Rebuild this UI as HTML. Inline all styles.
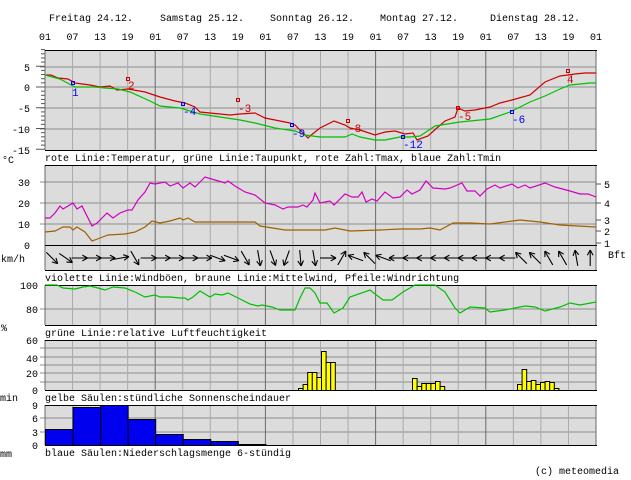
<!DOCTYPE html>
<html><head><meta charset="utf-8"><style>
html,body{margin:0;padding:0;background:#fff;width:631px;height:480px;overflow:hidden}
svg{display:block}
text{font-family:"Liberation Mono",monospace;font-size:10px;fill:#000}
</style></head><body>
<svg id="s" width="631" height="480" xmlns="http://www.w3.org/2000/svg">
<g id="bg"></g>
<text x="49" y="21">Freitag 24.12.</text>
<text x="160" y="21">Samstag 25.12.</text>
<text x="270" y="21">Sonntag 26.12.</text>
<text x="380" y="21">Montag 27.12.</text>
<text x="490" y="21">Dienstag 28.12.</text>
<g id="hrs" text-anchor="middle"></g>
<g text-anchor="end">
<text x="30" y="71">5</text><text x="30" y="91">0</text><text x="30" y="112">-5</text><text x="30" y="133">-10</text><text x="30" y="154">-15</text>
<text x="30" y="186">30</text><text x="30" y="207">20</text><text x="30" y="228">10</text><text x="30" y="249">0</text>
<text x="38" y="289">100</text><text x="38" y="313">80</text>
<text x="38" y="344">60</text><text x="38" y="362">40</text><text x="38" y="377">20</text><text x="38" y="394">0</text>
<text x="38" y="409">9</text><text x="38" y="422">6</text><text x="38" y="436">3</text><text x="38" y="449">0</text>
</g>
<text x="604" y="188">5</text><text x="604" y="207">4</text><text x="604" y="224">3</text><text x="604" y="235">2</text><text x="604" y="247">1</text>
<text x="608" y="258">Bft</text>
<text x="2" y="163">°C</text>
<text x="1" y="262">km/h</text>
<text x="1" y="331">%</text>
<text x="0" y="401">min</text>
<text x="0" y="457">mm</text>
<text x="45" y="161">rote Linie:Temperatur, grüne Linie:Taupunkt, rote Zahl:Tmax, blaue Zahl:Tmin</text>
<text x="45" y="281">violette Linie:Windböen, braune Linie:Mittelwind, Pfeile:Windrichtung</text>
<text x="45" y="336">grüne Linie:relative Luftfeuchtigkeit</text>
<text x="45" y="401">gelbe Säulen:stündliche Sonnenscheindauer</text>
<text x="45" y="456">blaue Säulen:Niederschlagsmenge 6-stündig</text>
<text x="535" y="474">(c) meteomedia</text>
<g id="fg"></g>
<g>
<text x="72" y="96" style="fill:#00f;font-size:11px">1</text>
<text x="128" y="89" style="fill:#c00;font-size:11px">2</text>
<text x="183" y="115" style="fill:#00f;font-size:11px">-4</text>
<text x="238" y="112" style="fill:#c00;font-size:11px">-3</text>
<text x="292" y="137" style="fill:#00f;font-size:11px">-9</text>
<text x="348" y="132" style="fill:#c00;font-size:11px">-8</text>
<text x="403" y="148" style="fill:#00f;font-size:11px">-12</text>
<text x="458" y="120" style="fill:#c00;font-size:11px">-5</text>
<text x="512" y="123" style="fill:#00f;font-size:11px">-6</text>
<text x="567" y="83" style="fill:#c00;font-size:11px">4</text>
</g>
</svg>
<script>
var NS="http://www.w3.org/2000/svg";
function el(p,t,a){var e=document.createElementNS(NS,t);for(var k in a)e.setAttribute(k,a[k]);document.getElementById(p).appendChild(e);return e;}
var panels=[[50,150],[165,270],[285,325],[340,390],[405,445]];
var hg=[[67,87,108,129],[182,203,224],[309],[348,357,365,373,382],[418,432]];
panels.forEach(function(p,i){
 el('bg','rect',{x:45,y:p[0],width:551,height:p[1]-p[0],fill:'#dcdcdc'});
 hg[i].forEach(function(y){el('bg','line',{x1:40,x2:596,y1:y,y2:y,stroke:'#8c8c8c'});});
 for(var j=0;j<=20;j++){var x=45+j*27.55;var d=j%4==0;
  el('bg','line',{x1:x,x2:x,y1:p[0],y2:p[1],stroke:d?'#6a6a6a':'#aaaaaa','stroke-width':1});}
 el('bg','line',{x1:45,x2:597,y1:p[0]+.5,y2:p[0]+.5,stroke:'#000'});
 el('bg','line',{x1:45,x2:597,y1:p[1]+.5,y2:p[1]+.5,stroke:'#000'});
});
el('bg','line',{x1:45,x2:597,y1:245.5,y2:245.5,stroke:'#000'});
for(var d=-15;d<=9;d++){var y=87-d*4.15;el('bg','line',{x1:d%5==0?36:41,x2:45,y1:y,y2:y,stroke:'#555'});}
[184,203,220,231,243].forEach(function(y){el('bg','line',{x1:596,x2:601,y1:y,y2:y,stroke:'#555'});});
var hl=['01','07','13','19'];
for(var j=0;j<=20;j++){var t=el('hrs','text',{x:45+j*27.55,y:40});t.textContent=hl[j%4];}
function pl(pts,c){el('fg','polyline',{points:pts,fill:'none',stroke:c,'stroke-width':1.2});}
pl("45,75 51,75 58,78 68,79 75,83 90,85 100,87 110,86 117,90 128,89 145,92 160,97 175,101 185,103 195,107 200,112 230,115 240,114 255,113 265,118 275,120 290,123 295,125 300,130 308,138 310,136 320,128 334,121 345,125 350,128 360,130 375,135 385,132 395,131 405,134 413,133 417,140 428,136 438,127 445,121 455,117 458,108 465,111 475,110 490,107 500,103 512,100 530,95 545,82 560,76 575,74 585,73 596,73","#d00000");
pl("45,75 60,79 75,87 95,87 105,88 118,89 130,92 150,101 160,106 180,108 200,114 220,117 240,120 255,123 275,128 295,131 305,135 320,137 335,137 345,137 352,134 360,137 375,140 385,140 400,137 410,137 420,136 435,126 460,122 490,119 510,112 530,102 545,96 560,89 570,85 590,83 596,83","#00c000");
pl("45,218 50,218 55,213 60,206 63,209 68,206 73,203 77,209 82,206 92,226 97,223 103,217 107,213 113,218 120,213 128,210 132,210 138,200 145,192 150,183 155,184 165,182 170,186 178,183 183,188 190,183 195,187 205,177 215,180 222,182 225,183 228,181 235,186 245,192 255,195 265,203 275,205 283,209 288,207 298,207 303,205 307,207 313,200 315,193 320,203 330,201 334,205 345,194 352,197 358,197 362,192 366,202 372,199 377,201 385,192 393,198 400,197 407,190 412,194 420,190 426,181 433,188 445,189 450,188 462,183 467,191 475,191 480,196 487,189 495,185 500,188 512,184 518,188 525,185 530,188 545,183 555,187 570,191 580,194 588,194 596,197","#d000c0");
pl("45,232 55,231 63,227 70,227 73,230 77,227 85,232 92,241 100,238 108,235 125,234 135,232 145,227 152,221 160,223 170,221 180,218 183,220 188,218 195,222 255,222 260,226 285,230 325,230 335,228 350,231 380,230 400,229 420,229 430,228 440,230 453,223 470,223 490,224 520,220 540,222 560,225 596,227","#a06000");
pl("45,285 57,285 63,288 75,289 83,287 90,286 98,288 105,290 113,287 125,288 135,292 145,297 155,295 160,297 170,297 180,298 185,298 188,300 193,297 200,291 210,297 215,294 222,295 228,293 236,297 250,304 258,306 262,305 272,307 280,310 295,310 300,298 305,288 310,288 315,293 320,303 327,303 334,313 343,308 350,297 370,290 383,300 392,300 403,292 415,285 435,285 445,292 455,308 460,313 470,307 485,308 490,312 505,310 525,306 535,307 545,311 560,307 570,303 580,305 596,302","#00c000");
function bar(x,w,top,bot,c){el('fg','rect',{x:x+.5,y:top+.5,width:w,height:bot-top,fill:c,stroke:'#000','stroke-width':1});}
[[298,388],[302.6,384],[307.2,372],[311.8,372],[316.4,377],[321,351],[325.6,362],[330.2,362],
 [412,378],[416.6,386],[421.2,383],[425.8,383],[430.4,383],[435,381],[439.6,386],
 [517,384],[521.6,369],[526.2,381],[530.8,380],[535.4,384],[540,382],[544.6,381],[549.2,382],[553.8,388]
].forEach(function(b){bar(b[0],4.6,b[1],390,'#ffff00');});
[[429],[407],[405],[419],[434],[439],[441],[444]].forEach(function(b,i){bar(45+i*27.55,27.55,b[0],445,'#0000ee');});
var ang=[45,35,0,0,0,-10,60,0,0,0,0,0,20,20,60,80,70,110,85,80,0,-60,200,225,200,180,180,180,180,180,180,180,180,180,225,225,240,240,260,270];
for(var i=0;i<40;i++){var cx=45+13.8*i+7,cy=258,a=ang[i]*Math.PI/180,L=8;
 var tx=cx+L*Math.cos(a),ty=cy+L*Math.sin(a),sx=cx-L*Math.cos(a),sy=cy-L*Math.sin(a);
 el('fg','line',{x1:sx,y1:sy,x2:tx,y2:ty,stroke:'#000','stroke-width':1.1});
 [0.5,-0.5].forEach(function(o){var b=a+Math.PI+o;el('fg','line',{x1:tx,y1:ty,x2:tx+6*Math.cos(b),y2:ty+6*Math.sin(b),stroke:'#000','stroke-width':1.1});});}
[[73,83,'#00f'],[128,79,'#c00'],[183,104,'#00f'],[238,100,'#c00'],[292,125,'#00f'],[348,121,'#c00'],[403,137,'#00f'],[458,108,'#c00'],[512,112,'#00f'],[568,71,'#c00']].forEach(function(m){
 el('fg','rect',{x:m[0]-1.5,y:m[1]-1.5,width:3,height:3,fill:'none',stroke:m[2],'stroke-width':1});});
</script>
</body></html>
